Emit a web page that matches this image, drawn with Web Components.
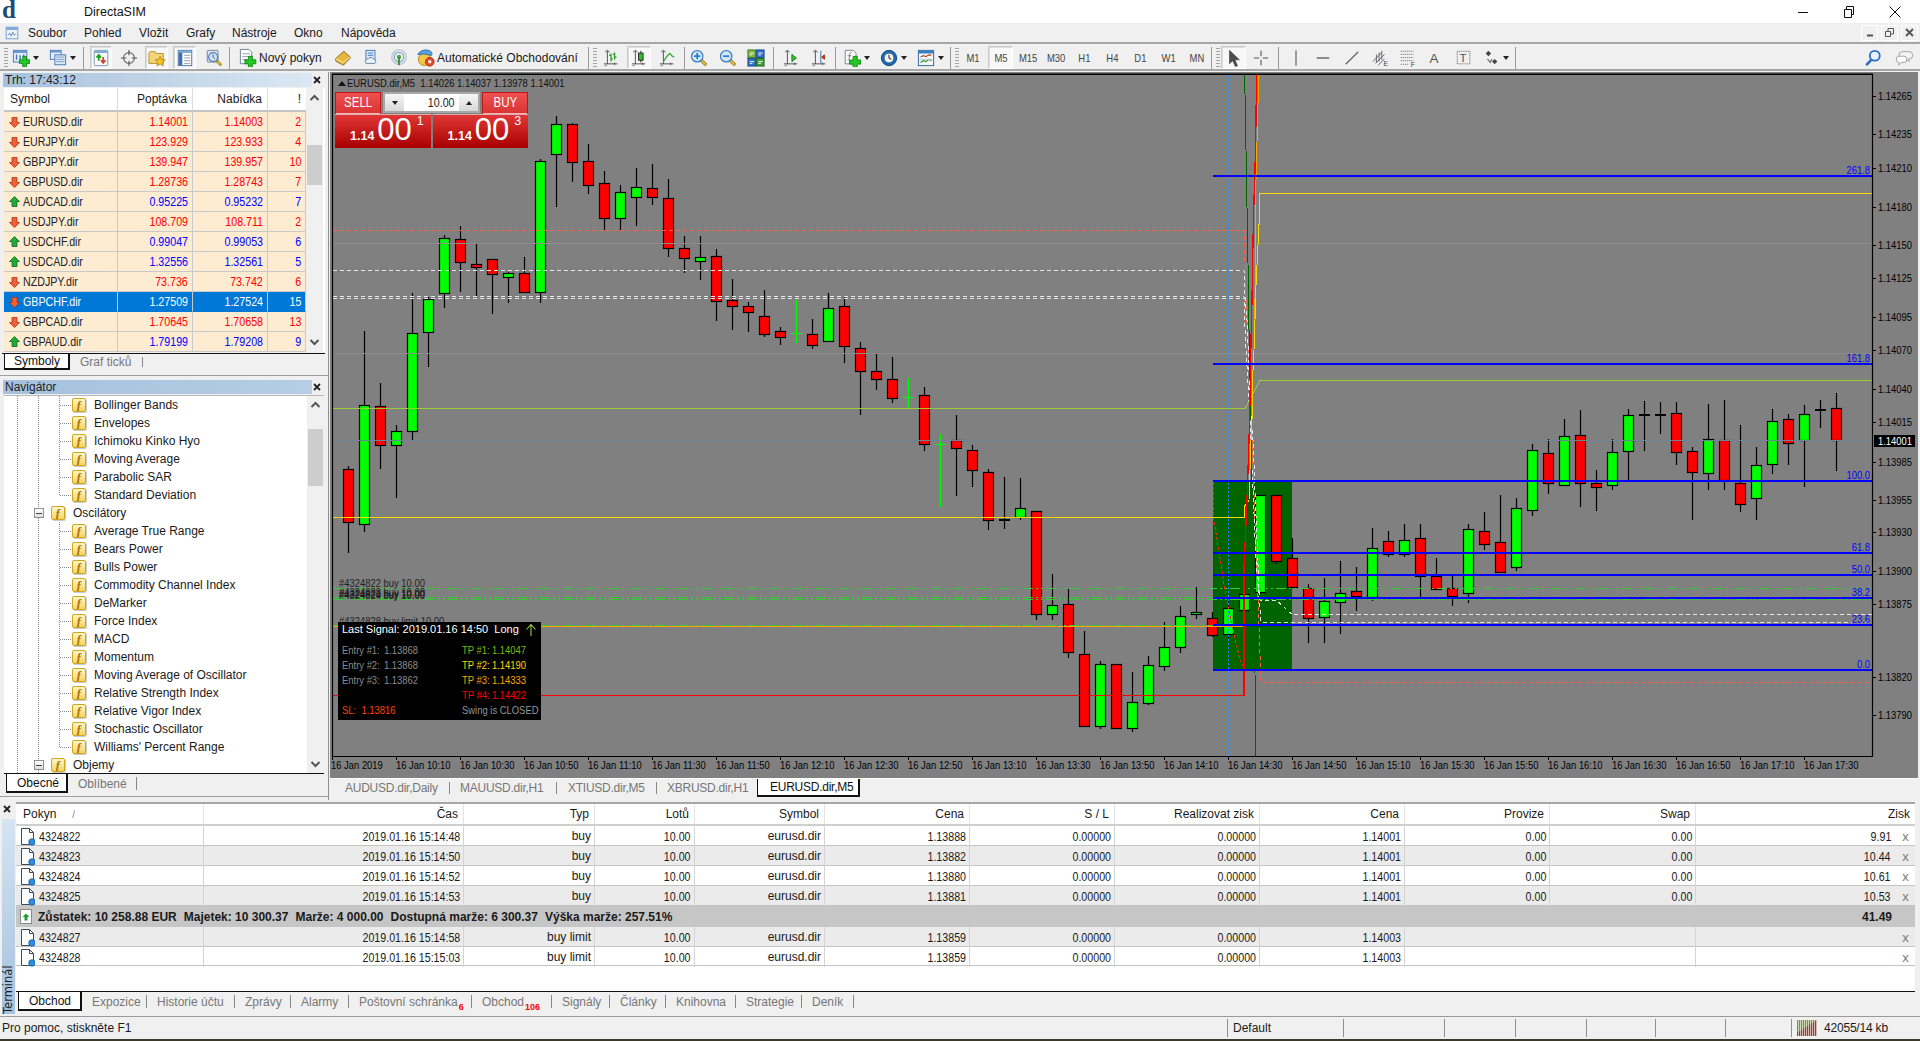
<!DOCTYPE html>
<html lang="cs"><head><meta charset="utf-8"><title>DirectaSIM</title>
<style>
html,body{margin:0;padding:0;width:1920px;height:1041px;overflow:hidden;background:#f0f0f0}
body{font:12px "Liberation Sans",Arial,sans-serif;color:#1a1a1a;display:flex;flex-direction:column}
</style></head><body>
<mt-titlebar title-text="DirectaSIM"></mt-titlebar>
<mt-menubar></mt-menubar>
<mt-toolbar></mt-toolbar>
<mt-workspace>
  <mt-market slot="side"></mt-market>
  <mt-navigator slot="side"></mt-navigator>
  <mt-chart slot="main"></mt-chart>
  <mt-tabs slot="main" class="chart">
    <mt-tab w="115" pad="10">AUDUSD.dir,Daily</mt-tab><mt-tab w="107" pad="10">MAUUSD.dir,H1</mt-tab><mt-tab w="100" pad="11">XTIUSD.dir,M5</mt-tab><mt-tab w="100" pad="10" nosep>XBRUSD.dir,H1</mt-tab><mt-tab w="103" pad="12" active>EURUSD.dir,M5</mt-tab>
  </mt-tabs>
</mt-workspace>
<mt-terminal></mt-terminal>
<mt-statusbar></mt-statusbar>
<script>
const SANS='"Liberation Sans",Arial,sans-serif';
const NT=`.nt{display:inline-block;white-space:nowrap;transform:scaleX(.82);transform-origin:100% 50%}.nt.l{transform-origin:0 50%}.nt.m{transform-origin:50% 50%}`;
const nt=(s,c='')=>`<span class="nt ${c}">${s}</span>`;
const plus=(x,y,s=1)=>`<path transform="translate(${x} ${y}) scale(${s})" d="M-2-5.5h4v3.5h3.5v4H2v3.5h-4V2h-3.5v-4H-2z" fill="#22c922" stroke="#0b7d0b" stroke-width=".8"/>`;
const doc=(x,y,w,h)=>`<path d="M${x+.5} ${y+.5}h${w-4}l3 3v${h-4}h-${w-1}z" fill="#fff" stroke="#6d7d8f"/>`;
const mag=(f,sym)=>`<path d="M12 12l6 6" stroke="#8a6d10" stroke-width="3.4"/><path d="M12.5 12.5l5 5" stroke="#f2cf45" stroke-width="1.8"/><circle cx="8" cy="8" r="6.3" fill="${f}" stroke="#3b7fc4" stroke-width="1.4"/>${sym}`;
const axis=`<path d="M6 2v15M2 16.5h15M3.5 3.5l2.5-2 2.500 2" fill="none" stroke="#555" stroke-width="1.100"/><path d="M3 18.500h2M14 15v3" stroke="#555"/>`;
const I={
 chartnew:`<rect x="1.500" y="1.500" width="15" height="13" fill="#e6effa" stroke="#3f73b5"/><rect x="2" y="2" width="14" height="2.500" fill="#6c9ad6"/><path d="M5 6v6M9 7v5M13 6v5" stroke="#3f73b5" stroke-width="1.500"/>${plus(14,14,1.05)}`,
 profiles:`<rect x="1.500" y="1.500" width="12" height="10" fill="#e6effa" stroke="#3f73b5"/><rect x="6.500" y="6.500" width="12" height="11" fill="#dbe6f5" stroke="#3f73b5"/><path d="M8 9h9M8 11.500h9M8 14h9" stroke="#7d9ecb"/><rect x="2" y="2" width="11" height="2" fill="#6c9ad6"/>`,
 market:`<rect x="2.500" y="1.500" width="15" height="17" rx="1" fill="#fff" stroke="#6d90ba"/><rect x="3" y="2" width="14" height="2.500" fill="#87aad8"/><path d="M7.500 13V7M5 9.500l2.500-3 2.500 3" fill="none" stroke="#1aa41a" stroke-width="2"/><path d="M12.500 9v6M10 12.500l2.500 3 2.500-3" fill="none" stroke="#d6402a" stroke-width="2"/>`,
 cross:`<circle cx="10" cy="10" r="6" fill="none" stroke="#6a6a6a" stroke-width="1.300"/><path d="M10 1v6M10 13v6M1 10h6M13 10h6" stroke="#555" stroke-width="1.300"/>`,
 folderstar:`<path d="M1 5l1-2h6l1 2h8v11H1z" fill="#f3d776" stroke="#b48c22"/><path d="M13.500 8l1.700 3.700 4 .4-3 2.700.9 4-3.600-2.100-3.600 2.100.9-4-3-2.700 4-.4z" fill="#f6c31f" stroke="#a67c10" stroke-width=".8"/>`,
 navlist:`<rect x="2.500" y="1.500" width="15" height="17" fill="#fff" stroke="#3f6ea8"/><rect x="3" y="2" width="14" height="2.500" fill="#87aad8"/><rect x="3" y="4" width="4" height="14" fill="#3d70ad"/><path d="M9 7h7M9 10h7M9 13h7M9 16h7" stroke="#8a99ad"/>`,
 termmag:`<rect x="2.500" y="1.500" width="12" height="13" rx="1" fill="#dce6f2" stroke="#6d7d8f"/><circle cx="9" cy="9" r="5" fill="#cfe0f3" stroke="#5a7fb0" stroke-width="1.300"/><path d="M9 6v3l2 2" stroke="#45618a" fill="none"/><path d="M13 13l5 5" stroke="#8a6d10" stroke-width="3"/><path d="M13.500 13.500l4 4" stroke="#f2cf45" stroke-width="1.500"/>`,
 neworder:`${doc(2,1,13,16)}<path d="M4.500 6h8M4.500 9h8M4.500 12h5" stroke="#8fa0b3"/>${plus(13,14.500,1.05)}`,
 book:`<path d="M1.500 11L11 2.500l7.500 7-8 8.500-8-4z" fill="#e8b63c" stroke="#8a6414"/><path d="M2 11l8 4 8-6" fill="none" stroke="#fff1b8"/>`,
 cloud:`<rect x="5.500" y="1.500" width="10" height="11" fill="#d9e9fa" stroke="#3f73b5"/><path d="M7.500 4.500h6M7.500 7h6" stroke="#3f73b5"/><path d="M5 13.500a2.500 2.500 0 0 1 3-2.500 3.500 3.500 0 0 1 6 .5 2.500 2.500 0 0 1 1.500 4.500H5.500A2.500 2.500 0 0 1 5 13.500z" fill="#eef3f9" stroke="#5e7a9c"/>`,
 signal:`<circle cx="10" cy="9" r="8" fill="none" stroke="#b5c3d1" stroke-width="1.500"/><circle cx="10" cy="9" r="5.300" fill="none" stroke="#7fa7c9" stroke-width="1.500"/><circle cx="10" cy="9" r="2.500" fill="#5aa84f"/><path d="M10 9v9" stroke="#3b8a34" stroke-width="2"/>`,
 expert:`<circle cx="9" cy="12" r="6.500" fill="#f3c64a" stroke="#b38916"/><path d="M2 7c1-4 9-7 14-3 1 1 1 3 0 4-4-2-10-2-14-1z" fill="#5aa3e0" stroke="#2a6ea8"/><circle cx="14.500" cy="14.500" r="4.500" fill="#e24a2b" stroke="#a02a12"/><rect x="13" y="13" width="3" height="3" fill="#fff"/>`,
 cbar:`${axis}<path d="M10 5v9M8 7h2M10 11h2M14 4v8M12 6h2M14 9h2" stroke="#1f9a1f" stroke-width="1.300"/>`,
 ccandle:`${axis}<path d="M12 2v13" stroke="#222"/><rect x="9.500" y="4.500" width="5" height="8" fill="#28c428" stroke="#222"/>`,
 cline:`${axis}<path d="M6 14l4-6 3-3 3 3 2 1" fill="none" stroke="#3aa53a" stroke-width="1.400"/>`,
 zin:mag('#d4e8fb','<path d="M8 4.500v7M4.500 8h7" stroke="#2f7fc8" stroke-width="2"/>'),
 zout:mag('#d4e8fb','<path d="M4.500 8h7" stroke="#2f7fc8" stroke-width="2"/>'),
 tile:`<rect x="1" y="1" width="8.500" height="8.500" fill="#7cb342" stroke="#3f7f1d"/><rect x="10.500" y="1" width="8.500" height="8.500" fill="#2f6fc7" stroke="#1d4b8f"/><rect x="1" y="10.500" width="8.500" height="8.500" fill="#2f6fc7" stroke="#1d4b8f"/><rect x="10.500" y="10.500" width="8.500" height="8.500" fill="#3f9a3a" stroke="#236b1f"/><path d="M3 4.500h5M3 6.500h3M12.500 4.500h5M12.500 6.500h3M3 14h5M3 16h3M12.500 14h5M12.500 16h3" stroke="#fff"/>`,
 autoscroll:`${axis}<path d="M11 6l5 4-5 4z" fill="#2dc82d" stroke="#157a15"/>`,
 chartshift:`${axis}<path d="M12 2v14" stroke="#2b6cb0"/><path d="M17 9h-4M13 9l3-2.500v5z" fill="#d83a1f" stroke="#b02a12"/>`,
 addind:`${doc(2,1,13,16)}<path d="M9.500 4C7 4 7.500 6 7 10c-.3 2-1 2.500-2 2.500M5 7.500h4.500" fill="none" stroke="#778"/>${plus(13.500,14.500,1.15)}`,
 clock:`<circle cx="10" cy="10" r="8.500" fill="#1f6fb8" stroke="#0d3f73"/><circle cx="10" cy="10" r="5.500" fill="#f2f2e6" stroke="#0d3f73" stroke-width=".8"/><path d="M10 6.500V10l2.500 1.500" fill="none" stroke="#333" stroke-width="1.200"/>`,
 template:`<rect x="1.500" y="1.500" width="17" height="17" fill="#f5f7fa" stroke="#1f5fa0"/><rect x="2" y="2" width="16" height="3" fill="#3a7fc2"/><path d="M4 9l3-1.500 3 1 3-2 3 .5" fill="none" stroke="#b04a1a" stroke-width="1.300"/><path d="M4 15l3-2 3 1 3-2.500 3 1.500" fill="none" stroke="#2e9a2e" stroke-width="1.300"/><path d="M2 11.500h16" stroke="#b9c6d6"/>`,
 arrow:`<path d="M5 1.500v15l3.500-3.500 3 6.500 2.500-1-3-6.500h5z" fill="#4d4d4d" stroke="#333" stroke-width=".6"/>`,
 thin:`<path d="M10 2v6M10 12v6M2 10h6M12 10h6" stroke="#555" stroke-width="1.200"/>`,
 vline:`<path d="M10 1.500v17" stroke="#555" stroke-width="1.200"/>`,
 hline:`<path d="M3 10h14" stroke="#555" stroke-width="1.400"/>`,
 trend:`<path d="M3 17L17 3" stroke="#666" stroke-width="1.400"/>`,
 channel:`<path d="M2 14l10-10M5 16l10-10M8 18l7-7M6 6v9M9 4v10M12 2v10" stroke="#666" stroke-width="1.100"/><text x="14" y="19" font-size="7.500" fill="#444" font-family="Liberation Sans">E</text>`,
 fib:`<path d="M2 2.500h14M2 6h14M2 9.500h14M2 13h14M2 17h9" stroke="#666" stroke-dasharray="1.200 1"/><text x="13" y="20" font-size="7.500" fill="#444" font-family="Liberation Sans">F</text>`,
 label:`<text x="4" y="16" font-size="15" fill="#555" font-family="Liberation Sans">A</text>`,
 tbox:`<rect x="2.500" y="2.500" width="14" height="14" fill="none" stroke="#555" stroke-dasharray="1 1"/><text x="5" y="14.500" font-size="13" fill="#555" font-family="Liberation Sans">T</text>`,
 shapes:`<path d="M6 2l3 3-3 3-3-3zM13 11l3 3-3 3-3-3z" fill="#444"/><path d="M5 11l3 4 2-4" fill="none" stroke="#666" stroke-width="1.200"/>`,
 search:`<circle cx="12" cy="7.500" r="5.500" fill="#eaf3fc" stroke="#2b6cc4" stroke-width="2"/><path d="M8 12L2.500 18" stroke="#2b6cc4" stroke-width="3"/>`,
 chat:`<path d="M8 3h8a3.500 3.500 0 0 1 3.500 3.500v1a3.500 3.500 0 0 1-3.500 3.500h-1l1 3-4-3H8a3.500 3.500 0 0 1-3.500-3.500v-1A3.500 3.500 0 0 1 8 3z" fill="#f4f4f4" stroke="#9a9a9a"/><path d="M4 8h6a3 3 0 0 1 3 3v1a3 3 0 0 1-3 3H7l-3 3 .5-3a3 3 0 0 1-3-3v-1a3 3 0 0 1 2.500-3z" fill="#fdfdfd" stroke="#9a9a9a"/>`,
 menuapp:`<rect x="1.500" y="1.500" width="15" height="15" fill="#eef4fb" stroke="#5b8cc6"/><rect x="2" y="2" width="14" height="3" fill="#7ca6dc"/><path d="M4 12l2-3 2 4 2-5 2 4 2-2" fill="none" stroke="#4a78b0"/>`,
 up:`<path d="M6 1.500l5 5H8.500v5h-5v-5H1z" fill="#25a83a" stroke="#0f6b20" stroke-width=".8"/>`,
 down:`<path d="M6 12.500l5-5H8.500v-5h-5v5H1z" fill="#f0603a" stroke="#b03312" stroke-width=".8"/>`,
 orderdoc:`<path d="M1.500 1.500h8l4 4v12h-12z" fill="#fff" stroke="#3f4a57"/><path d="M9.500 1.500v4h4" fill="none" stroke="#3f4a57"/><circle cx="12" cy="15" r="3.300" fill="#2f8be0" stroke="#15568f" stroke-width=".7"/>`,
};
const svg=(n,w=20,h=w,vb='0 0 20 20')=>`<svg xmlns="http://www.w3.org/2000/svg" width="${w}" height="${h}" viewBox="${vb}" style="display:block;flex:none">${I[n]}</svg>`;
const el=(n,c)=>customElements.define(n,c);
function shadow(host,html){const t=document.createElement('template');t.innerHTML=html;const r=host.attachShadow({mode:'open'});r.appendChild(t.content.cloneNode(true));return r}

el('mt-titlebar',class extends HTMLElement{connectedCallback(){shadow(this,`<style>
:host{display:flex;height:23px;flex:none;background:#fff;align-items:center;color:#111}
.logo{width:84px;height:23px;box-sizing:border-box;padding-left:2px;font:bold 25px/20px "Liberation Serif",serif;color:#1b4a72;overflow:hidden}
.logo::before{content:"d"}
.t{flex:1;font-size:12.500px}
.c{display:flex}.c svg{display:block}
.b{width:46px;height:23px;display:flex;align-items:center;justify-content:center}
</style><span class="logo"></span><span class="t">${this.getAttribute('title-text')}</span>
<span class="c"><span class="b"><svg width="10" height="10"><path d="M0 5.500h10" stroke="#111"/></svg></span>
<span class="b"><svg width="10" height="12"><path d="M.5 3.500h7v8h-7zM2.500 3V.5h7v8H8" fill="none" stroke="#111"/></svg></span>
<span class="b" style="margin-right:2px"><svg width="12" height="12"><path d="M.5.500l11 11M11.500.5l-11 11" stroke="#111"/></svg></span></span>`)}});

el('mt-menubar',class extends HTMLElement{connectedCallback(){
const items=[['Soubor',56],['Pohled',55],['Vložit',47],['Grafy',46],['Nástroje',62],['Okno',47],['Nápověda',80]];
shadow(this,`<style>
:host{display:flex;height:19px;flex:none;background:#f0f0f0;align-items:center;border-bottom:2px solid #a6a6a6;padding-left:5px}
.a{margin-right:9px}
span.i{display:block}
.r{margin-left:auto;display:flex;gap:3px;padding-right:2px}
.w{width:17px;height:16px;background:#f0f0f0;border:1px solid #fff;box-sizing:border-box;display:flex;align-items:center;justify-content:center}
</style><span class="a">${svg('menuapp',14,14,'0 0 18 18')}</span>${items.map(([t,w])=>`<span class="i" style="width:${w}px">${t}</span>`).join('')}
<span class="r"><span class="w"><svg width="8" height="8"><path d="M1 6.500h6" stroke="#555" stroke-width="2"/></svg></span><span class="w"><svg width="9" height="9"><path d="M.5 3.500h5v5h-5zM3 3V.5h5.500V6H6" fill="none" stroke="#555"/></svg></span><span class="w"><svg width="9" height="9"><path d="M1 1l7 7M8 1L1 8" stroke="#555" stroke-width="1.800"/></svg></span></span>`)}});

el('mt-toolbar',class extends HTMLElement{connectedCallback(){
const B=(s,e,n,o={})=>({k:'btn',s,e,n,...o}),S=s=>({k:'sep',s,e:s+1}),G=s=>({k:'grip',s,e:s+4}),D=s=>({k:'drop',s,e:s+7});
const T=(s,e,t,o={})=>({k:'tf',s,e,t,...o});
const list=[G(4),B(10,31,'chartnew'),D(33),B(47,68,'profiles'),D(70),S(83),B(90,112,'market',{p:1}),B(118,139,'cross'),B(145,168,'folderstar',{p:1}),B(173,196,'navlist',{p:1}),B(203,224,'termmag'),S(229),
{k:'txt',s:238,e:323,n:'neworder',t:'Nový pokyn'},B(333,352,'book'),B(360,380,'cloud'),B(389,408,'signal'),{k:'txt',s:416,e:584,n:'expert',t:'Automatické Obchodování'},S(588),G(593),
B(601,621,'cbar'),B(627,651,'ccandle',{p:1}),B(657,677,'cline'),S(684),B(689,709,'zin'),B(718,738,'zout'),B(746,766,'tile'),S(773),B(781,801,'autoscroll'),B(809,829,'chartshift'),S(835),B(842,862,'addind'),D(864),B(879,899,'clock'),D(901),B(916,936,'template'),D(938),S(950),G(955),
T(961,984,'M1'),T(988,1013,'M5',{p:1}),T(1015,1041,'M15'),T(1043,1069,'M30'),T(1072,1097,'H1'),T(1100,1125,'H4'),T(1128,1153,'D1'),T(1156,1182,'W1'),T(1184,1209,'MN'),S(1211),G(1216),
B(1221,1246,'arrow',{p:1}),B(1251,1271,'thin'),S(1278),B(1286,1306,'vline'),B(1313,1333,'hline'),B(1342,1362,'trend'),B(1369,1390,'channel'),B(1398,1418,'fib'),B(1425,1445,'label'),B(1454,1474,'tbox'),B(1482,1502,'shapes'),D(1503),S(1515),B(1863,1883,'search'),B(1892,1916,'chat')];
let x=0,h='';
for(const i of list){const ml=i.s-x;x=i.e;const st=`margin-left:${ml}px;width:${i.e-i.s}px`;
 if(i.k==='btn')h+=`<span class="b${i.p?' p':''}" style="${st}">${svg(i.n,i.n==='chat'?24:18,18)}</span>`;
 if(i.k==='sep')h+=`<span class="sep" style="${st}"></span>`;
 if(i.k==='grip')h+=`<span class="grip" style="${st}"></span>`;
 if(i.k==='drop')h+=`<span class="drop" style="${st}"></span>`;
 if(i.k==='tf')h+=`<span class="b tf${i.p?' p':''}" style="${st}">${nt(i.t,'m')}</span>`;
 if(i.k==='txt')h+=`<span class="b tx" style="${st}">${svg(i.n,19,19)}<span>${i.t}</span></span>`;
}
shadow(this,`<style>${NT}
:host{display:flex;height:23px;padding-top:2px;flex:none;background:#f0f0f0;border-bottom:2px solid #a6a6a6;align-items:center;box-sizing:content-box}
.b{height:23px;display:flex;align-items:center;justify-content:center;box-sizing:border-box;flex:none}
.p{background:#f8f8f8;border:1px solid #c9c9c9;border-right-color:#fff;border-bottom-color:#fff;box-shadow:inset 1px 1px 0 #ddd}
.sep{height:22px;background:#9a9a9a;flex:none}
.grip{height:20px;flex:none;background:repeating-linear-gradient(#a2a2a2 0 1px,transparent 1px 3px)}
.drop{height:5px;flex:none;display:block;overflow:hidden}
.drop::before{content:"";display:block;width:0;height:0;border:3.500px solid transparent;border-top:4px solid #222;border-bottom:0;margin:.5px 0 0}
.tf{font:11.500px ${SANS};color:#444}
.tx{justify-content:flex-start;gap:2px;white-space:nowrap;color:#1a1a1a}
</style>${h}`)}});

el('mt-workspace',class extends HTMLElement{connectedCallback(){shadow(this,`<style>
:host{display:flex;height:728px;flex:none;padding-top:1px;box-sizing:content-box;overflow:hidden}
.s{width:328px;display:flex;flex-direction:column;gap:3px;flex:none;border-right:1px solid #8f8f8f;margin-right:1px}
.m{width:1590px;display:flex;flex-direction:column}
</style><div class="s"><slot name="side"></slot></div><div class="m"><slot name="main"></slot></div>`)}});

const closeX=`<svg width="9" height="9" style="display:block"><path d="M1 1l6 6M7 1L1 7" stroke="#222" stroke-width="1.800"/></svg>`;
const panelCss=`
.hd{height:14px;margin:1px 16px 0 3px;background:var(--g);line-height:14px;padding-left:2px;color:#222;flex:none}
.cl{position:absolute;right:6px;top:4px}
.sb{width:17px;flex:none;background:#f0f0f0;position:relative;display:flex;flex-direction:column;justify-content:space-between;align-items:center}
.sb svg{display:block}
.th{position:absolute;left:1px;right:1px;background:#cdcdcd}`;
const chev=d=>`<svg width="11" height="9" viewBox="0 0 11 9"><path d="${d?'M1.500 2l4 4 4-4':'M1.500 7l4-4 4 4'}" fill="none" stroke="#555" stroke-width="2"/></svg>`;

el('mt-tabs',class extends HTMLElement{connectedCallback(){shadow(this,`<style>
:host{display:flex;height:19px;flex:none;border-top:1px solid #111;align-items:stretch;background:#f0f0f0;padding-left:var(--tabs-pad,4px)}
:host(.chart){border-top:1px solid #fff;--tabs-pad:5px;height:18px;letter-spacing:-.25px}
</style><slot></slot>`)}});
el('mt-tab',class extends HTMLElement{connectedCallback(){const a=this.hasAttribute('active'),ns=this.hasAttribute('nosep');
shadow(this,`<style>
:host{display:flex;align-items:center;box-sizing:border-box;flex:none;width:${this.getAttribute('w')}px;padding-left:${this.getAttribute('pad')||10}px;white-space:nowrap;color:${a?'#111':'#777'};position:relative;${a?'background:#fff;border:1px solid #111;border-top:0;border-right-width:2px;border-bottom-width:2px;':''}}
.sep{position:absolute;right:0;top:3px;bottom:3px;width:1px;background:#888}
</style><slot></slot>${a||ns?'':'<span class="sep"></span>'}`)}});

el('mt-market',class extends HTMLElement{connectedCallback(){
const rows=[['EURUSD.dir','1.14001','1.14003','2',0],['EURJPY.dir','123.929','123.933','4',0],['GBPJPY.dir','139.947','139.957','10',0],['GBPUSD.dir','1.28736','1.28743','7',0],['AUDCAD.dir','0.95225','0.95232','7',1],['USDJPY.dir','108.709','108.711','2',0],['USDCHF.dir','0.99047','0.99053','6',1],['USDCAD.dir','1.32556','1.32561','5',1],['NZDJPY.dir','73.736','73.742','6',0],['GBPCHF.dir','1.27509','1.27524','15',0,1],['GBPCAD.dir','1.70645','1.70658','13',0],['GBPAUD.dir','1.79199','1.79208','9',1]];
shadow(this,`<style>${NT}
:host{display:flex;flex-direction:column;height:304px;position:relative;flex:none;--g:linear-gradient(90deg,#a6c1dd,#dce8f3);box-sizing:border-box;border-bottom:1px solid #a0a0a0}
${panelCss}
.wrap{display:flex;margin:1px 3px 0 4px;height:264px;flex:none;background:#fff}
.tb{width:302px;flex:none;display:grid;grid-template-columns:114px 75px 75px 38px;grid-auto-rows:20px;grid-template-rows:24px;align-content:start;overflow:hidden}
.h,.c{display:flex;align-items:center;box-sizing:border-box;white-space:nowrap;overflow:hidden}
.h{background:#fff;border-right:1px solid #dcdcdc;border-bottom:2px solid #c4c4c4;justify-content:flex-end;padding-right:5px}
.h.l{justify-content:flex-start;padding-left:6px}
.c{background:#fdebd2;border-right:1px solid #c9c9c9;border-bottom:1px solid #c9c9c9;justify-content:flex-end;padding-right:4px;font:13px ${SANS}}
.c.s{justify-content:flex-start;padding-left:4px;color:#222;gap:2px}
.dn{color:#f00}.upc{color:#00f}
.sel{background:#0078d7;color:#fff!important;border-color:#0078d7 #c9c9c9}
.sb{height:264px}.th{top:57px;height:40px}.sb span{padding:5px 0}
.tabs{margin:1px 3px 0 2px;height:auto}
</style>
<div class="hd">Trh: 17:43:12</div><span class="cl">${closeX}</span>
<div class="wrap"><div class="tb"><span class="h l">Symbol</span><span class="h">Poptávka</span><span class="h">Nabídka</span><span class="h" style="border-right:0">!</span>
${rows.map(r=>{const k=r[5]?' sel':'',col=r[4]?'upc':'dn';return `<span class="c s${k}">${svg(r[4]?'up':'down',13,14,'0 0 12 14')}${nt(r[0],'l')}</span><span class="c ${col}${k}">${nt(r[1])}</span><span class="c ${col}${k}">${nt(r[2])}</span><span class="c ${col}${k}">${nt(r[3])}</span>`}).join('')}
</div><div class="sb"><span>${chev(0)}</span><div class="th"></div><span>${chev(1)}</span></div></div>
<mt-tabs class="tabs" style="--tabs-pad:2px"><mt-tab active w="66" pad="9">Symboly</mt-tab><mt-tab w="73" pad="10">Graf ticků</mt-tab></mt-tabs>`)}});

el('mt-navigator',class extends HTMLElement{connectedCallback(){
const kids=[['Bollinger Bands',2],['Envelopes',2],['Ichimoku Kinko Hyo',2],['Moving Average',2],['Parabolic SAR',2],['Standard Deviation',3],['Oscilátory',1],['Average True Range',2],['Bears Power',2],['Bulls Power',2],['Commodity Channel Index',2],['DeMarker',2],['Force Index',2],['MACD',2],['Momentum',2],['Moving Average of Oscillator',2],['Relative Strength Index',2],['Relative Vigor Index',2],['Stochastic Oscillator',2],["Williams' Percent Range",3],['Objemy',1]];
shadow(this,`<style>
:host{display:flex;flex-direction:column;height:418px;position:relative;flex:none;--g:linear-gradient(90deg,#a6c1dd,#b5cde6);box-sizing:border-box;border-bottom:1px solid #a0a0a0}
${panelCss}
.wrap{display:flex;margin:1px 4px 0 4px;height:377px;flex:none;background:#fff;overflow:hidden;border-top:1px solid #b8b8b8}
.tree{width:303px;flex:none;overflow:hidden}
.r{height:18px;display:flex;align-items:center;white-space:nowrap;box-sizing:border-box;
--dv:repeating-linear-gradient(#8a8a8a 0 1px,transparent 1px 2px);--dh:repeating-linear-gradient(90deg,#8a8a8a 0 1px,transparent 1px 2px);
background-repeat:no-repeat}
.d2{padding-left:68px;background-image:var(--dv),var(--dv),var(--dv),var(--dh);background-size:1px 100%,1px 100%,1px 100%,11px 1px;background-position:13px 0,34px 0,55px 0,56px 9px}
.d3{padding-left:68px;background-image:var(--dv),var(--dv),var(--dv),var(--dh);background-size:1px 100%,1px 100%,1px 10px,11px 1px;background-position:13px 0,34px 0,55px 0,56px 9px}
.d1{padding-left:30px;background-image:var(--dv),var(--dv);background-size:1px 100%,1px 100%;background-position:13px 0,34px 0}
.f{width:14px;height:14px;box-sizing:border-box;border:1px solid #d2a41f;border-radius:2px;background:linear-gradient(#fff6c9,#f5d55f);font:italic bold 12px/12px "Liberation Serif",serif;color:#a8740b;text-align:center;flex:none;margin-right:8px;box-shadow:1px 1px 0 #ccc}
.f::before{content:"ƒ"}
.bx{width:10px;height:10px;box-sizing:border-box;border:1px solid #8f8f8f;background:linear-gradient(#fff,#ddd);flex:none;margin-right:7px;display:block}
.bx::before{content:"";display:block;height:1px;background:#444;margin:3.500px 1px 0}
.sb{height:377px}.th{top:33px;height:57px}.sb span{padding:4px 0}
</style>
<div class="hd">Navigátor</div><span class="cl">${closeX}</span>
<div class="wrap"><div class="tree">${kids.map(([t,d])=>`<div class="r d${d}">${d===1?'<span class="bx"></span>':''}<span class="f"></span><span>${t}</span></div>`).join('')}</div>
<div class="sb"><span>${chev(0)}</span><div class="th"></div><span>${chev(1)}</span></div></div>
<mt-tabs style="--tabs-pad:2px;margin:0 4px"><mt-tab active w="62" pad="10">Obecné</mt-tab><mt-tab w="69" pad="10">Oblíbené</mt-tab></mt-tabs>`)}});

const CAN=`r 469 522 466 553|g 405 524 331 532|r 406 445 383 469|g 431 445 425 498|g 333 431 293 440|g 299 332 297 367|g 238 293 235 308|r 239 262 226 292|r 264 267 244 296|r 259 274 259 314|g 273 277 272 303|r 273 292 257 292|g 161 292 159 303|g 124 154 116 207|r 124 162 123 182|r 161 185 144 194|r 183 218 171 230|g 192 218 185 230|g 187 197 168 226|r 188 197 164 205|r 198 248 179 257|r 248 258 236 273|g 257 261 236 280|r 256 301 249 321|r 300 306 279 330|r 306 312 302 332|r 316 334 290 337|r 331 337 327 345|c 333 333 300 343|r 334 345 319 349|g 308 341 293 341|r 306 346 297 363|r 348 371 342 415|r 371 379 354 390|r 379 398 357 403|c 397 397 378 409|r 395 444 387 451|c 444 444 434 507|r 440 448 415 496|r 450 470 445 487|r 472 520 469 530|d 520 520 477 529|g 508 517 478 520|r 511 614 511 620|g 605 614 574 620|r 604 652 589 658|r 654 726 631 726|g 664 726 661 729|r 664 728 664 729|g 702 728 672 732|g 665 703 656 705|g 647 666 622 671|g 616 647 606 653|g 612 614 587 619|r 618 635 612 637|g 608 634 600 638|g 594 610 565 612|g 495 592 495 594|r 495 561 495 564|r 558 587 538 587|r 588 618 584 643|g 601 617 578 643|g 593 602 561 634|r 591 596 567 611|g 548 597 528 601|r 541 554 531 557|g 540 554 524 557|r 538 576 524 597|r 576 589 558 590|r 588 596 576 606|g 529 593 524 603|r 531 544 512 550|r 542 572 495 572|g 508 567 498 571|g 450 510 444 516|r 453 483 439 494|g 436 485 419 485|r 435 483 410 507|r 483 487 470 511|g 452 485 439 490|g 415 451 409 482|d 415 415 401 451|d 415 415 402 434|r 413 452 402 465|r 451 472 447 520|g 439 473 404 490|r 440 480 400 490|r 483 504 425 512|g 465 498 447 520|g 421 464 409 474|r 419 443 414 465|g 414 440 405 487|d 410 410 400 428|r 408 440 393 471`;

el('mt-chart',class extends HTMLElement{connectedCallback(){
const TX=(x,y,s,ex='')=>`<text transform="translate(${x} ${y}) scale(.82 1)" ${ex}>${s}</text>`;
let c='';
CAN.split('|').forEach((s,k)=>{const [t,a,b,wt,wb]=s.split(' ');const x=348+16*k,A=+a,B=+b,WT=+wt,WB=+wb;
 if(t==='c'){c+=`<path d="M${x+.5} ${WT}V${WB}M${x-5} ${A+.5}h11" stroke="#00ff00"/>`;return}
 c+=`<path d="M${x+.5} ${WT}V${WB}" stroke="#000" stroke-width="1.200"/>`;
 if(t==='d'){c+=`<rect x="${x-5}" y="${A-1}" width="11" height="2" fill="#000"/>`;return}
 c+=`<rect x="${x-4.500}" y="${A+.5}" width="10" height="${Math.max(B-A,2)}" fill="${t==='g'?'#00ff00':'#ff0000'}" stroke="#000" stroke-width="1.200"/>`;
});
const H=(y,x1,x2,st,extra='')=>`<path shape-rendering="crispEdges" d="M${x1} ${y+.5}H${x2}" stroke="${st}" ${extra}/>`;
const dd='stroke-dasharray="10 3 2 3 2 3"';
const pts=a=>a.map(p=>p.join(',')).join(' ');
const PL=(a,st,ex='')=>`<polyline shape-rendering="crispEdges" points="${pts(a)}" fill="none" stroke="${st}" ${ex}/>`;
let lines='';
lines+=H(243,333,1872,'#8c8c8c')+H(353,333,1872,'#8c8c8c');
lines+=`<path shape-rendering="crispEdges" d="M1228.500 75V756" stroke="#1e90ff" stroke-dasharray="2 2"/>`;
lines+=H(440,333,1872,'#6f8298');
[588,597,599,625].forEach(y=>lines+=H(y,333,1872,'#32cd32',dd));
lines+=PL([[333,230.5],[1244,230.5],[1245,262],[1246,300],[1248,345],[1251,400],[1252,440],[1258,600],[1261,682.5],[1872,682.5]],'#ff6347','stroke-dasharray="4 3"');
lines+=PL([[1213,482],[1214,520],[1218,545],[1225,590],[1233,630],[1240,660],[1244,668]],'#ff2020','stroke-dasharray="3 2"');
lines+=PL([[333,270.5],[1244,270.5],[1245,296],[1247,320],[1249,370],[1250,400],[1253,440],[1259,590],[1260,600],[1276,600],[1292,614.5],[1872,614.5]],'#e6e6e6','stroke-dasharray="4 3"');
lines+=PL([[333,296.5],[1244,296.5],[1245,330],[1250,420],[1256,560],[1261,622.5],[1872,622.5]],'#e6e6e6','stroke-dasharray="4 3"');
lines+=H(298,333,1244,'#e6e6e6','stroke-dasharray="4 3"');
lines+=PL([[333,408.5],[1245,408.5],[1260,380.5],[1872,380.5]],'#9acd32');
lines+=PL([[1244.5,74],[1245,94],[1246,150],[1247,207],[1248,263],[1249,330],[1250,380],[1251,420],[1253,560],[1255,673],[1256,756]],'#006400');
lines+=PL([[1258,74],[1258,103],[1257,142],[1256,180],[1255,300],[1254,340]],'#ffa500');
lines+=PL([[333,517.5],[1244,517.5],[1244,507],[1249,500],[1251,440],[1252,420],[1253,370],[1254,350],[1255,320],[1256,285],[1257,265],[1258,245],[1259,225],[1260,193.5],[1872,193.5]],'#ffd700');
lines+=H(626,333,1244,'#ffa500','stroke-width="1.200"');
lines+=PL([[333,695.5],[1244,695.5],[1244,568],[1247,500],[1249,440],[1250,400],[1251,340],[1252,300],[1253,240],[1254,200],[1255,170],[1256,120],[1256.5,75]],'#ff0000','stroke-width="1.300"');
const fib=[[176,'261.8'],[364,'161.8'],[481,'100.0'],[553,'61.8'],[575,'50.0'],[598,'38.2'],[625,'23.6'],[670,'0.0']];
let f='';fib.forEach(([y,t])=>{f+=`<path shape-rendering="crispEdges" d="M1213 ${y}H1872" stroke="#0000ff" stroke-width="2"/>${TX(1870,y-2,t,'text-anchor="end" fill="#0000ff"')}`});
let ax='';
[[96,'1.14265'],[134,'1.14235'],[168,'1.14210'],[206.5,'1.14180'],[245,'1.14150'],[278,'1.14125'],[317,'1.14095'],[350,'1.14070'],[389,'1.14040'],[422,'1.14015'],[461.5,'1.13985'],[500,'1.13955'],[532,'1.13930'],[571,'1.13900'],[604,'1.13875'],[677,'1.13820'],[715,'1.13790']].forEach(([y,t])=>{const yy=Math.round(y);ax+=`<path d="M1873 ${yy+.5}h3" stroke="#000"/>${TX(1878,yy+4,t)}`});
let tm=`${TX(331,769,'16 Jan 2019')}<path d="M332.500 757v3" stroke="#000"/>`;
let mins=10*60+10;
for(let i=0;i<23;i++){const x=396+64*i,m=mins+20*i,s=String(Math.floor(m/60)).padStart(2,'0')+':'+String(m%60).padStart(2,'0');
 tm+=`<path d="M${x+.5} 757v3" stroke="#000"/>${TX(x,769,'16 Jan '+s)}`}
let ord='';[[587,'#4324822 buy 10.00'],[596,'#4324823 buy 10.00'],[598,'#4324825 buy 10.00'],[599,'#4324824 buy 10.00'],[625,'#4324828 buy limit 10.00']].forEach(([y,t])=>ord+=TX(339,y,t,'fill="#1f1f1f"'));
const sig=[['Entry #1:','1.13868','TP #1:','1.14047','#7fb80e'],['Entry #2:','1.13868','TP #2:','1.14190','#ffd700'],['Entry #3:','1.13862','TP #3:','1.14333','#ffa500'],['','','TP #4:','1.14422','#ff0000']];
shadow(this,`<style>${NT}
:host{display:block;position:relative;height:706px;width:1588px;flex:none;background:#808080;overflow:hidden;font:11.500px ${SANS}}
svg{display:block}
text{font:11.500px ${SANS}}
.cap{position:absolute;left:8px;top:4px;display:flex;align-items:center;height:14px;white-space:nowrap;color:#111}
.cap::before{content:"";border:4px solid transparent;border-bottom:5px solid #111;border-top:0;margin-right:1px}
.sig{position:absolute;left:8px;top:550px;width:203px;height:98px;background:#000;box-sizing:border-box;padding:0 4px}
.sig .t{height:14px;display:flex;align-items:center;color:#fff;font:11px ${SANS};white-space:nowrap}
.sig .t svg{margin-left:auto}
.gr{display:grid;grid-template-columns:42px 78px 30px 1fr;grid-auto-rows:15px;margin-top:6px;align-items:center;white-space:nowrap}
.g{color:#8c8c8c}
.tr{position:absolute;left:5px;top:20px;width:193px}
</style>
<svg width="1590" height="706" viewBox="330 72 1590 706" xmlns="http://www.w3.org/2000/svg">
<rect x="1213" y="482" width="79" height="188" fill="#006400"/>
${c}${lines}${f}
${ord}
<path d="M332.500 74V756.500H1872.500V74H332z" fill="none" stroke="#000" stroke-width="1.200"/>
<path d="M332 74.500H1873" stroke="#000"/>
${ax}
<rect x="1874" y="435" width="41" height="12" fill="#000"/>${TX(1878,445,'1.14001','fill="#fff"')}
${tm}
</svg>
<div class="cap">${nt('EURUSD.dir,M5&nbsp; 1.14026 1.14037 1.13978 1.14001','l')}</div>
<mt-tradepanel class="tr"></mt-tradepanel>
<div class="sig"><div class="t">Last Signal: 2019.01.16 14:50&nbsp; Long<svg width="12" height="13"><path d="M6 13V2M1.500 6.500L6 1.500l4.500 5" fill="none" stroke="#9acd32" stroke-width="1.100"/></svg></div>
<div class="gr">${sig.map(r=>`<span class="g">${r[0]?nt(r[0],'l'):''}</span><span class="g">${r[1]?nt(r[1],'l'):''}</span><span style="color:${r[4]}">${nt(r[2],'l')}</span><span style="color:${r[4]}">${nt(r[3],'l')}</span>`).join('')}
<span style="grid-column:1/3;color:#ff4500">${nt('SL:&nbsp; 1.13816','l')}</span><span style="grid-column:3/5;color:#959595">${nt('Swing is CLOSED','l')}</span></div></div>`)}});

el('mt-tradepanel',class extends HTMLElement{connectedCallback(){shadow(this,`<style>${NT}
:host{display:block;color:#fff;font:13px ${SANS}}
.top{display:flex;gap:2px;height:22px;align-items:flex-start}
.bt{width:46px;height:22px;background:linear-gradient(#ee5050,#d83434);border:1px solid #c01616;border-bottom:0;box-sizing:border-box;display:flex;justify-content:center;align-items:center;box-shadow:inset 0 -1px 0 #f7b6b6;font-size:14px;padding-bottom:3px}
.lot{width:97px;height:21px;flex:none;display:flex;box-sizing:border-box;border:2px solid #a8a8a8;background:#fff;color:#222;font-size:13px}
.lot span.ar,.lot span.v{display:flex;align-items:center}
.ar{width:19px;background:linear-gradient(#f6f6f6,#d8d8d8);justify-content:center;flex:none}
.ar i{display:block;border:3.500px solid transparent}
.v{flex:1;justify-content:flex-end;padding-right:4px;padding-bottom:1px}
.bot{display:flex;gap:2px}
.p{width:96px;height:34px;background:linear-gradient(#e03636,#a80000);display:flex;align-items:baseline;padding-left:15px;box-sizing:border-box;white-space:nowrap;border-top:1px solid #d8b0b0}
.a{font-size:12.500px;font-weight:bold;margin-right:3px}
.b{font-size:31px;line-height:30px}
.c{font-size:12.500px;position:relative;top:-15px;margin-left:5px}
</style>
<div class="top"><div class="bt">${nt('SELL','m')}</div><div class="lot"><span class="ar"><i style="border-top:4px solid #222;border-bottom:0"></i></span><span class="v">${nt('10.00')}</span><span class="ar"><i style="border-bottom:4px solid #222;border-top:0"></i></span></div><div class="bt">${nt('BUY','m')}</div></div>
<div class="bot"><div class="p"><span class="a">1.14</span><span class="b">00</span><span class="c">1</span></div><div class="p"><span class="a">1.14</span><span class="b">00</span><span class="c">3</span></div></div>`)}});

el('mt-terminal',class extends HTMLElement{connectedCallback(){
const cols='188px 260px 131px 100px 130px 145px 145px 145px 145px 145px 146px 219px';
const hd=[['Pokyn','l'],['Čas'],['Typ'],['Lotů'],['Symbol'],['Cena'],['S / L'],['Realizovat zisk'],['Cena'],['Provize'],['Swap'],['Zisk']];
const x=`<span class="x">x</span>`;
const R=(id,tm,ty,c,sl,pr,open,h,cls)=>{const cells=[[tm,1],[ty,0],['10.00',1],['eurusd.dir',0],[c,1],['0.00000',1],['0.00000',1],[pr,1]];
 return `<div class="row ${cls}" style="height:${h}px"><span class="c l"><span class="ic">${svg('orderdoc',15,19,'0 0 15 19')}</span><span class="n">${nt(id,'l')}</span></span>${cells.map(([v,n])=>`<span class="c">${n?`<span class="n">${nt(v)}</span>`:v}</span>`).join('')}${open?`<span class="c"><span class="n">${nt('0.00')}</span></span><span class="c"><span class="n">${nt('0.00')}</span></span><span class="c z"><span class="n">${nt(sl)}</span>${x}</span>`:`<span class="c" style="grid-column:span 2"></span><span class="c z">${x}</span>`}</div>`};
shadow(this,`<style>${NT}
:host{display:flex;height:216px;flex:none;position:relative;background:#f0f0f0}
.st{width:16px;flex:none;padding-top:4px;box-sizing:border-box;display:flex;flex-direction:column;align-items:center}
.st svg{margin:1px 0 0 -1px;display:block}
.bl{margin-top:5px;width:13px;height:195px;background:linear-gradient(#d6e4f1,#a5c1de);display:flex;align-items:flex-start;justify-content:center;box-sizing:border-box;padding-top:2px}
.bl span{writing-mode:vertical-rl;transform:rotate(180deg);font:11.500px "DejaVu Sans",sans-serif;color:#1a1a1a;height:100%;text-align:left}
.mn{flex:1;display:flex;flex-direction:column;margin-top:2px;border-top:2px solid #a6a6a6;min-width:0;margin-right:5px}
.tb{flex:1;background:#fff;overflow:hidden;min-height:0}
.row{display:grid;grid-template-columns:${cols};box-sizing:border-box;border-bottom:1px solid #c4c4c4}
.alt{background:#ebebeb}
.c{display:flex;align-items:center;justify-content:flex-end;padding-right:3px;box-sizing:border-box;border-right:1px solid #d4d4d4;white-space:nowrap}
.c.l{justify-content:flex-start;padding-left:4px;gap:4px}
.n{font:13px ${SANS}}
.head .c{padding-right:5px;border-right:1px solid #e4e4e4}
.head .c.l{padding-left:7px}
.head{border-bottom:2px solid #cfcfcf}
.row>.c:last-child{border-right:0}
.z{padding-right:5px}
.x{font:13px ${SANS};color:#777;margin-left:10px;width:9px;text-align:center}
.ic{display:block;margin-top:1px}
.sum{background:#c6c6c6;display:flex;align-items:center;font-weight:bold;height:21px;padding:0 23px 0 4px;white-space:nowrap}
.sum .g{width:12px;height:15px;background:#fff;border:1px solid #8a8a8a;margin-right:6px;display:flex;align-items:center;justify-content:center;box-sizing:border-box}
.sum b{margin-left:auto}
.sum i{font-style:normal;margin-right:7px}
sub{color:#f00;font-size:9px;font-weight:bold;line-height:0;position:relative;top:5px;vertical-align:baseline;margin-left:1px}
</style>
<div class="st">${closeX}<div class="bl"><span>Terminál</span></div></div>
<div class="mn"><div class="tb">
<div class="row head" style="height:22px">${hd.map(([t,l])=>`<span class="c${l?' l':''}">${t}${l?'<span style="color:#888;margin-left:12px;font-size:10px">/</span>':''}</span>`).join('')}</div>
${R('4324822','2019.01.16 15:14:48','buy','1.13888','9.91','1.14001',1,20,'')}
${R('4324823','2019.01.16 15:14:50','buy','1.13882','10.44','1.14001',1,20,'alt')}
${R('4324824','2019.01.16 15:14:52','buy','1.13880','10.61','1.14001',1,20,'')}
${R('4324825','2019.01.16 15:14:53','buy','1.13881','10.53','1.14001',1,20,'alt')}
<div class="sum"><span class="g"><svg width="8" height="10" viewBox="0 0 14 14"><path d="M7 1l6 6H9.500v6h-5V7H1z" fill="#1c9c30"/></svg></span><i>Zůstatek: 10 258.88 EUR</i><i>Majetek: 10 300.37</i><i>Marže: 4 000.00</i><i>Dostupná marže: 6 300.37</i><i>Výška marže: 257.51%</i><b>41.49</b></div>
${R('4324827','2019.01.16 15:14:58','buy limit','1.13859','','1.14003',0,20,'alt')}
${R('4324828','2019.01.16 15:15:03','buy limit','1.13859','','1.14003',0,19,'')}
</div>
<mt-tabs style="--tabs-pad:2px;margin-bottom:5px"><mt-tab active w="64" pad="10">Obchod</mt-tab><mt-tab w="65" pad="10">Expozice</mt-tab><mt-tab w="88" pad="10">Historie účtu</mt-tab><mt-tab w="56" pad="10">Zprávy</mt-tab><mt-tab w="58" pad="10">Alarmy</mt-tab><mt-tab w="123" pad="10">Poštovní schránka<sub>6</sub></mt-tab><mt-tab w="80" pad="10">Obchod<sub>106</sub></mt-tab><mt-tab w="58" pad="10">Signály</mt-tab><mt-tab w="56" pad="10">Články</mt-tab><mt-tab w="70" pad="10">Knihovna</mt-tab><mt-tab w="66" pad="10">Strategie</mt-tab><mt-tab w="52" pad="10">Deník</mt-tab></mt-tabs>
</div>`)}});

el('mt-statusbar',class extends HTMLElement{connectedCallback(){
const seps=[1343,1444,1515,1586,1655,1725];let bars='';
for(let i=0;i<10;i++){const h=4+i*1.300;bars+=`<rect x="${i*2}" y="${16-h}" width="1.300" height="${h}" fill="#a23a22"/><rect x="${i*2}" y="0" width="1.300" height="${16-h}" fill="#7a9a22"/>`}
shadow(this,`<style>
:host{display:flex;height:25px;flex:none;background:#f0f0f0;border-top:1px solid #9a9a9a;border-bottom:2px solid #3a3a2a;box-sizing:border-box;align-items:center;white-space:nowrap}
.p{display:flex;align-items:center;height:18px;box-sizing:border-box;flex:none}
.b{border-left:1px solid #8f8f8f}
</style><span class="p" style="width:1227px;padding-left:2px">Pro pomoc, stiskněte F1</span>
<span class="p b" style="width:116px;padding-left:5px">Default</span>${seps.slice(1).map((s,i)=>`<span class="p b" style="width:${s-seps[i]}px"></span>`).join('')}<span class="p b" style="width:66px"></span>
<span class="p b" style="padding-left:5px;gap:7px"><svg width="20" height="16">${bars}</svg><span style="letter-spacing:-.2px">42055/14 kb</span></span>`)}});
</script>
</body></html>
